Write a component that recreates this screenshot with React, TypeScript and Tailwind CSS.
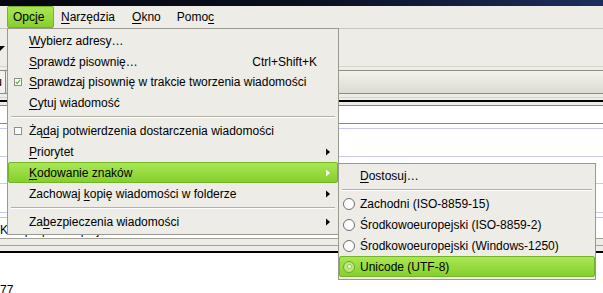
import React from 'react'

const font = { fontFamily: '"Liberation Sans", Arial, sans-serif' }

function U({ children }: { children: React.ReactNode }) {
  return <span className="underline underline-offset-2 decoration-1">{children}</span>
}

function Arrow({ white = false }: { white?: boolean }) {
  return (
    <svg width="5" height="8" viewBox="0 0 5 8" className="absolute right-[6px] top-1/2 -translate-y-1/2">
      <path d="M0 0.5 L4 4 L0 7.5 Z" fill={white ? '#ffffff' : '#000000'} />
    </svg>
  )
}

function Item({
  children,
  h = 'h-[20.5px]',
  active = false,
  arrow = false,
  shortcut,
  mark,
  markLeft = 'left-[5px]',
}: {
  children: React.ReactNode
  h?: string
  active?: boolean
  arrow?: boolean
  shortcut?: string
  mark?: React.ReactNode
  markLeft?: string
}) {
  return (
    <div
      className={`relative flex items-center pl-[20px] pr-[20px] ${h} ${
        active ? 'rounded-[2px] border border-[#74b429] bg-gradient-to-b from-[#a9e752] to-[#86cf2c] -mx-px' : ''
      }`}
    >
      {mark && <div className={`absolute ${markLeft} top-1/2 -translate-y-1/2`}>{mark}</div>}
      <span className="flex-1 whitespace-nowrap">{children}</span>
      {shortcut && <span className="whitespace-nowrap">{shortcut}</span>}
      {arrow && <Arrow white={active} />}
    </div>
  )
}

function Sep() {
  return (
    <div className="h-[7px] flex flex-col justify-center px-[2px]">
      <div className="h-px bg-[#b3b1a6]" />
      <div className="h-px bg-white" />
    </div>
  )
}

function Check({ on }: { on: boolean }) {
  return (
    <div className="w-[8px] h-[8px] border border-[#8f8e86] bg-white flex items-center justify-center">
      {on && (
        <svg width="8" height="8" viewBox="0 0 8 8">
          <path d="M1 4 L3 6 L7 1" stroke="#5cb82a" strokeWidth="1.6" fill="none" />
        </svg>
      )}
    </div>
  )
}

function Radio({ on = false }: { on?: boolean }) {
  return (
    <div
      className={`w-[12px] h-[12px] rounded-full border ${
        on ? 'border-[#6da635] bg-[#b8ec70]' : 'border-[#6f6e68] bg-white'
      } flex items-center justify-center`}
    >
      {on && <div className="w-[5px] h-[5px] rounded-full bg-[#ffffff] border border-[#8fc850]" />}
    </div>
  )
}

function MenuBar() {
  return (
    <div className="h-[22px] bg-[#edece6] flex items-stretch text-[12px] text-black pl-[7px]">
      <div className="flex items-center px-[5px] w-[47px] rounded-[2px] border border-[#74b429] bg-gradient-to-b from-[#a9e752] to-[#86cf2c]">
        Opc<U>j</U>e
      </div>
      <div className="flex items-center pl-[7px]"><U>N</U>arzędzia</div>
      <div className="flex items-center pl-[17px]"><U>O</U>kno</div>
      <div className="flex items-center pl-[16px]">Pomo<U>c</U></div>
    </div>
  )
}

function Background() {
  return (
    <div className="relative w-[603px] h-[293px] bg-white overflow-hidden text-[12px] text-black" style={font}>
      <div className="h-[6px] bg-gradient-to-r from-[#05070d] via-[#0a0f1f] to-[#1c2f5c]" />
      <MenuBar />
      <div className="h-px bg-[#c9c7bb]" />
      {/* toolbar area */}
      <div className="h-[37px] bg-[#edece6] relative">
        <svg width="6" height="6" className="absolute left-0 top-[16px]">
          <path d="M0 1 L5 1 L0 6 Z" fill="#000" />
        </svg>
      </div>
      <div className="h-px bg-[#d7d5c9]" />
      <div className="h-[3px] bg-[#edece6]" />
      <div className="h-px bg-[#8f8d82]" />
      <div className="h-[22px] bg-gradient-to-b from-[#f3f2ec] to-[#dcdbd2] relative">
        <div className="absolute left-[-6px] top-[-1px] h-[24px] w-[12px] border border-[#8f8d82] rounded-[2px] bg-[#f3f2ec] flex items-center justify-end pr-[3px] text-[12px]">
          Ku
        </div>
      </div>
      <div className="h-px bg-[#8f8d82]" />
      <div className="h-[3px] bg-[#edece6]" />
      <div className="h-px bg-[#d7d5c9]" />
      <div className="h-[2px] bg-[#edece6]" />
      <div className="h-[2px] bg-black" />
      <div className="h-[3px] bg-[#edece6]" />
      <div className="h-px bg-[#8a897f]" />
      <div className="h-[17px] bg-white" />
      <div className="h-px bg-[#8a897f]" />
      <div className="h-[4px] bg-white" />
      <div className="h-px bg-[#c8c8f4]" />
      <div className="h-[27px] bg-white" />
      <div className="h-px bg-[#c8c8f4]" />
      <div className="h-[26px] bg-white" />
      <div className="h-px bg-[#c8c8f4]" />
      <div className="h-[28px] bg-white" />
      <div className="h-px bg-[#c8c8f4]" />
      <div className="h-[4px] bg-white" />
      <div className="h-px bg-[#c7c6bd]" />
      <div className="h-[20px] bg-white relative">
        <div className="absolute left-0 top-[3px] text-[12px] whitespace-nowrap">Komprepa Reopiej</div>
      </div>
      <div className="h-px bg-[#a3a298]" />
      <div className="h-[6px] bg-[#edece6]" />
      <div className="h-px bg-[#a3a298]" />
      <div className="h-[5px] bg-[#edece6]" />
      <div className="h-[2px] bg-black" />
      <div className="h-[33px] bg-white relative">
        <div className="absolute left-0 top-[31px] text-[12px] leading-none">77</div>
      </div>

      {/* main menu */}
      <div className="absolute left-[7px] top-[28px] w-[332px] border border-[#9a998f] bg-[#edece6] pt-[2px] pb-[2px] px-px">
        <Item><U>W</U>ybierz adresy…</Item>
        <Item shortcut="Ctrl+Shift+K"><U>S</U>prawdź pisownię…</Item>
        <Item mark={<Check on />}><U>S</U>prawdzaj pisownię w trakcie tworzenia wiadomości</Item>
        <Item><U>C</U>ytuj wiadomość</Item>
        <Sep />
        <Item h="h-[21px]" mark={<Check on={false} />}>Żą<U>d</U>aj potwierdzenia dostarczenia wiadomości</Item>
        <Item h="h-[21px]" arrow><U>P</U>riorytet</Item>
        <Item h="h-[21px]" arrow active><U>K</U>odowanie znaków</Item>
        <Item h="h-[21px]" arrow>Zachowaj <U>k</U>opię wiadomości w folderze</Item>
        <Sep />
        <Item h="h-[21px]" arrow>Za<U>b</U>ezpieczenia wiadomości</Item>
      </div>

      {/* submenu */}
      <div className="absolute left-[338px] top-[163px] w-[258px] border border-[#9a998f] bg-[#edece6] pt-px pb-[2px] px-px">
        <Item h="h-[21px]"><U>D</U>ostosuj…</Item>
        <Sep />
        <Item h="h-[21px]" markLeft="left-[3px]" mark={<Radio />}>Zachodni (ISO-8859-15)</Item>
        <Item h="h-[21px]" markLeft="left-[3px]" mark={<Radio />}>Środkowoeuropejski (ISO-8859-2)</Item>
        <Item h="h-[21px]" markLeft="left-[3px]" mark={<Radio />}>Środkowoeuropejski (Windows-1250)</Item>
        <Item h="h-[21px]" markLeft="left-[3px]" active mark={<Radio on />}>Unicode (UTF-8)</Item>
      </div>
    </div>
  )
}

export default function App() {
  return <Background />
}
